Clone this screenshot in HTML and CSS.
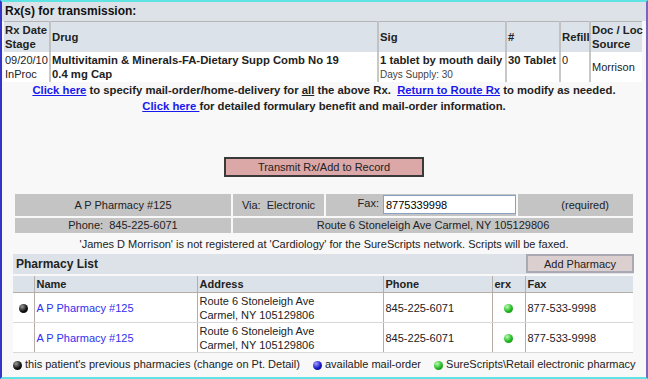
FILE: index.html
```html
<!DOCTYPE html>
<html lang="en">
<head>
    <meta charset="UTF-8">
    <title>Rx Transmission</title>
    <link rel="stylesheet" href="styles.css">
</head>
<body>
    <div class="frame">
        <div class="title-bar">Rx(s) for transmission:</div>

        <table class="rx-table">
            <colgroup>
                <col class="c-date">
                <col class="c-drug">
                <col class="c-sig">
                <col class="c-qty">
                <col class="c-refill">
                <col class="c-doc">
            </colgroup>
            <tr class="head">
                <th>Rx Date<br>Stage</th>
                <th>Drug</th>
                <th>Sig</th>
                <th>#</th>
                <th>Refill</th>
                <th>Doc / Loc<br>Source</th>
            </tr>
            <tr>
                <td>09/20/10<br>InProc</td>
                <td class="bold">Multivitamin &amp; Minerals-FA-Dietary Supp Comb No 19<br>0.4 mg Cap</td>
                <td><b>1 tablet by mouth daily</b><br><span class="small">Days Supply: 30</span></td>
                <td class="bold">30 Tablet</td>
                <td>0</td>
                <td class="middle">Morrison</td>
            </tr>
        </table>

        <div class="links">
            <p><a href="#">Click here</a> to specify mail-order/home-delivery for <u>all</u> the above Rx.&nbsp; <a href="#">Return to Route Rx</a> to modify as needed.</p>
            <p><a href="#">Click here </a>for detailed formulary benefit and mail-order information.</p>
        </div>

        <div class="transmit-row">
            <button class="transmit-btn">Transmit Rx/Add to Record</button>
        </div>

        <table class="pharm-info">
            <tr class="tall">
                <td class="p-name">A P Pharmacy #125</td>
                <td class="p-via">Via:&nbsp; Electronic</td>
                <td class="p-fax">Fax: <input type="text" value="8775339998"></td>
                <td class="p-req">(required)</td>
            </tr>
            <tr>
                <td>Phone:&nbsp; 845-225-6071</td>
                <td colspan="3">Route 6 Stoneleigh Ave Carmel, NY 105129806</td>
            </tr>
        </table>

        <p class="warning">'James D Morrison' is not registered at 'Cardiology' for the SureScripts network. Scripts will be faxed.</p>

        <div class="list-bar">
            <span>Pharmacy List</span>
            <button class="add-btn">Add Pharmacy</button>
        </div>

        <table class="pharm-list">
            <colgroup>
                <col class="l-dot">
                <col class="l-name">
                <col class="l-addr">
                <col class="l-phone">
                <col class="l-erx">
                <col class="l-fax">
            </colgroup>
            <tr class="head">
                <th></th>
                <th>Name</th>
                <th>Address</th>
                <th>Phone</th>
                <th>erx</th>
                <th>Fax</th>
            </tr>
            <tr>
                <td class="center"><span class="dot black"></span></td>
                <td><a href="#">A P Pharmacy #125</a></td>
                <td>Route 6 Stoneleigh Ave<br>Carmel, NY 105129806</td>
                <td>845-225-6071</td>
                <td class="center"><span class="dot green"></span></td>
                <td>877-533-9998</td>
            </tr>
            <tr>
                <td></td>
                <td><a href="#">A P Pharmacy #125</a></td>
                <td>Route 6 Stoneleigh Ave<br>Carmel, NY 105129806</td>
                <td>845-225-6071</td>
                <td class="center"><span class="dot green"></span></td>
                <td>877-533-9998</td>
            </tr>
        </table>

        <div class="legend">
            <span class="dot black"></span> this patient's previous pharmacies (change on Pt. Detail)
            <span class="dot blue gap"></span> available mail-order
            <span class="dot green gap"></span> SureScripts\Retail electronic pharmacy
        </div>
    </div>
</body>
</html>
```

FILE: styles.css
```css
* {
    margin: 0;
    padding: 0;
    box-sizing: border-box;
}

body {
    font-family: "Liberation Sans", Arial, sans-serif;
    font-size: 11px;
    color: #222;
    background: #fff;
}

.frame {
    width: 648px;
    height: 379px;
    background: #f8f8f8;
    border-top: 2px solid #5fe3e3;
    border-bottom: 2px solid #5fe3e3;
    border-left: 2px solid #3434c8;
    border-right: 2px solid #7a64c0;
    overflow: hidden;
}

.title-bar {
    background: #dde2e9;
    font-weight: bold;
    font-size: 12px;
    height: 19px;
    line-height: 19px;
    padding-left: 3px;
    color: #111;
}

/* Rx table */
.rx-table {
    margin-left: 2px;
    width: 638px;
    table-layout: fixed;
    border-collapse: collapse;
    border-top: 1px solid #b5b5b5;
}

.rx-table th {
    background: #dce2e9;
    font-size: 11.3px;
    text-align: left;
    line-height: 14px;
    padding: 0 1px;
    height: 30px;
    white-space: nowrap;
    border-left: 2px solid #c2c2c2;
}

.rx-table th:first-child,
.rx-table td:first-child {
    border-left: none;
}

.rx-table td {
    background: #fff;
    font-size: 11px;
    line-height: 14px;
    vertical-align: top;
    padding: 1px 1px 0;
    height: 30px;
    white-space: nowrap;
    border-left: 2px solid #c8c8c8;
}

.rx-table .bold,
.rx-table b {
    font-weight: bold;
    font-size: 11.3px;
}

.rx-table .middle {
    vertical-align: middle;
}

.rx-table .small {
    font-size: 10px;
    color: #444;
}

.c-date { width: 46px; }
.c-drug { width: 328px; }
.c-sig { width: 128px; }
.c-qty { width: 54px; }
.c-refill { width: 30px; }
.c-doc { width: 52px; }

/* links */
.links {
    text-align: center;
    font-weight: bold;
    font-size: 11.3px;
    line-height: 16px;
}

.links a {
    color: #1818ee;
}

/* transmit */
.transmit-row {
    display: flex;
    justify-content: center;
    margin-top: 43px;
}

.transmit-btn {
    width: 200px;
    height: 20px;
    background: #dba7a7;
    border: 2px solid #3a3a3a;
    font-family: inherit;
    font-size: 11px;
    color: #222;
}

/* pharmacy info */
.pharm-info {
    margin: 15px 0 0 11px;
    width: 622px;
    border-collapse: separate;
    border-spacing: 2px;
    text-align: center;
}

.pharm-info td {
    background: #c4c4c4;
    height: 15px;
    padding: 0;
}

.pharm-info .tall td {
    height: 22px;
}

.p-name { width: 216px; }
.p-via { width: 91px; }
.p-fax { width: 190px; text-align: right; }
.p-req { text-align: right; padding-right: 24px !important; }

.pharm-info input {
    width: 133px;
    height: 19px;
    border: 1px solid #8aa0c0;
    font-family: inherit;
    font-size: 11px;
    padding: 0 2px;
    margin-left: 1px;
    vertical-align: middle;
}

.warning {
    text-align: center;
    line-height: 16px;
    margin-top: 1px;
}

/* pharmacy list */
.list-bar {
    margin: 2px 0 0 11px;
    width: 621px;
    height: 20px;
    background: #dde2e9;
    display: flex;
    justify-content: space-between;
    align-items: center;
    font-size: 12px;
    font-weight: bold;
    padding-left: 3px;
}

.add-btn {
    width: 108px;
    height: 19px;
    background: #dccfcf;
    border: 2px solid #a9a9b4;
    font-family: inherit;
    font-size: 11px;
    color: #222;
}

.pharm-list {
    margin: 2px 0 0 11px;
    width: 620px;
    table-layout: fixed;
    border-collapse: collapse;
}

.pharm-list th {
    background: #dce2e9;
    text-align: left;
    height: 17px;
    padding: 0 2px;
    border-left: 1px solid #b4aea6;
    border-bottom: 1px solid #b4aea6;
}

.pharm-list td {
    background: #fff;
    height: 30px;
    padding: 0 2px;
    line-height: 14px;
    border-left: 1px solid #b4aea6;
    border-bottom: 1px solid #d8d8d8;
}

.pharm-list th:first-child,
.pharm-list td:first-child {
    border-left: none;
}

.pharm-list a {
    color: #3030f0;
    text-decoration: none;
}

.pharm-list .center {
    text-align: center;
}

.l-dot { width: 21px; }
.l-name { width: 163px; }
.l-addr { width: 186px; }
.l-phone { width: 109px; }
.l-erx { width: 33px; }
.l-fax { width: 108px; }

.dot {
    display: inline-block;
    width: 9px;
    height: 9px;
    border-radius: 50%;
    vertical-align: middle;
}

.dot.black {
    background: radial-gradient(circle at 35% 30%, #999 0, #111 55%, #000 100%);
}

.dot.green {
    background: radial-gradient(circle at 35% 30%, #b8ffb0 0, #22b822 55%, #117711 100%);
}

.dot.blue {
    background: radial-gradient(circle at 35% 30%, #a0a0ff 0, #1818c8 55%, #000080 100%);
}

.legend {
    font-size: 11px;
    margin: 5px 0 0 8px;
    white-space: nowrap;
    color: #222;
}

.legend .dot {
    margin-left: 3px;
}

.legend .dot.gap {
    margin-left: 10px;
}
```
